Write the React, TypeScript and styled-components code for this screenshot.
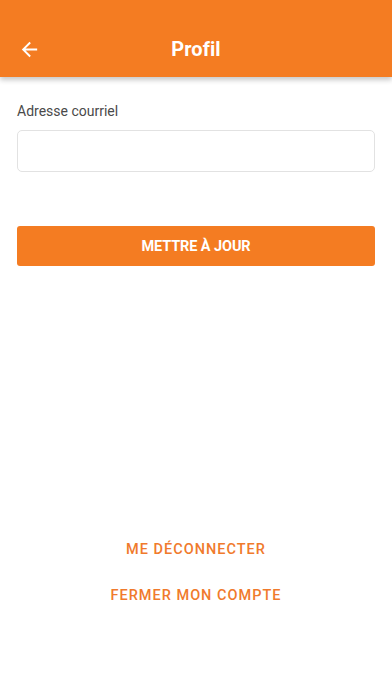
import * as React from 'react';
import styled, { createGlobalStyle } from 'styled-components';

const ORANGE = '#f47c22';

const GlobalStyle = createGlobalStyle`
  html, body {
    margin: 0;
    padding: 0;
    background: #ffffff;
  }
  * {
    box-sizing: border-box;
  }
`;

const Screen = styled.div`
  display: flex;
  flex-direction: column;
  width: 392px;
  height: 696px;
  background: #ffffff;
  font-family: Roboto, 'Liberation Sans', sans-serif;
  overflow: hidden;
`;

const Header = styled.header`
  position: relative;
  display: flex;
  align-items: center;
  justify-content: center;
  height: 77px;
  padding-top: 20px;
  background: ${ORANGE};
  box-shadow: 0 3px 5px rgba(0, 0, 0, 0.22);
  z-index: 1;
`;

const BackButton = styled.button`
  position: absolute;
  left: 16px;
  top: 36px;
  display: flex;
  align-items: center;
  justify-content: center;
  width: 26px;
  height: 26px;
  padding: 0;
  border: none;
  background: transparent;
`;

const Title = styled.h1`
  margin: 0;
  color: #ffffff;
  font-size: 20px;
  font-weight: 700;
  letter-spacing: 0.1px;
`;

const Body = styled.main`
  display: flex;
  flex-direction: column;
  flex: 1;
  padding: 26px 17px 0 17px;
`;

const Label = styled.label`
  color: #4a4a4a;
  font-size: 14px;
  line-height: 17px;
`;

const Input = styled.input`
  margin-top: 10px;
  height: 42px;
  width: 100%;
  border: 1px solid #e2e2e2;
  border-radius: 5px;
  outline: none;
  padding: 0 12px;
  font-family: inherit;
  font-size: 15px;
`;

const PrimaryButton = styled.button`
  margin-top: 54px;
  height: 40px;
  width: 100%;
  border: none;
  border-radius: 3px;
  background: ${ORANGE};
  color: #ffffff;
  font-family: inherit;
  font-size: 14.5px;
  font-weight: 700;
  letter-spacing: -0.1px;
`;

const Footer = styled.div`
  display: flex;
  flex-direction: column;
  align-items: center;
  gap: 28px;
  margin-top: auto;
  padding-bottom: 91px;
`;

const LinkButton = styled.button`
  border: none;
  background: transparent;
  padding: 0;
  color: #f07a2c;
  font-family: inherit;
  font-size: 14.5px;
  font-weight: 500;
  letter-spacing: 1px;
  line-height: 18px;
`;

export default function App() {
  const [email, setEmail] = React.useState('');

  return (
    <>
      <GlobalStyle />
      <Screen>
        <Header>
          <BackButton aria-label='Retour'>
            <svg width='23' height='23' viewBox='0 0 24 24'>
              <path
                d='M20 11H7.83l5.59-5.59L12 4l-8 8 8 8 1.41-1.41L7.83 13H20v-2z'
                fill='#ffffff'
              />
            </svg>
          </BackButton>
          <Title>Profil</Title>
        </Header>
        <Body>
          <Label htmlFor='email'>Adresse courriel</Label>
          <Input
            id='email'
            value={email}
            onChange={(e) => setEmail(e.target.value)}
          />
          <PrimaryButton>METTRE À JOUR</PrimaryButton>
          <Footer>
            <LinkButton>ME DÉCONNECTER</LinkButton>
            <LinkButton>FERMER MON COMPTE</LinkButton>
          </Footer>
        </Body>
      </Screen>
    </>
  );
}
